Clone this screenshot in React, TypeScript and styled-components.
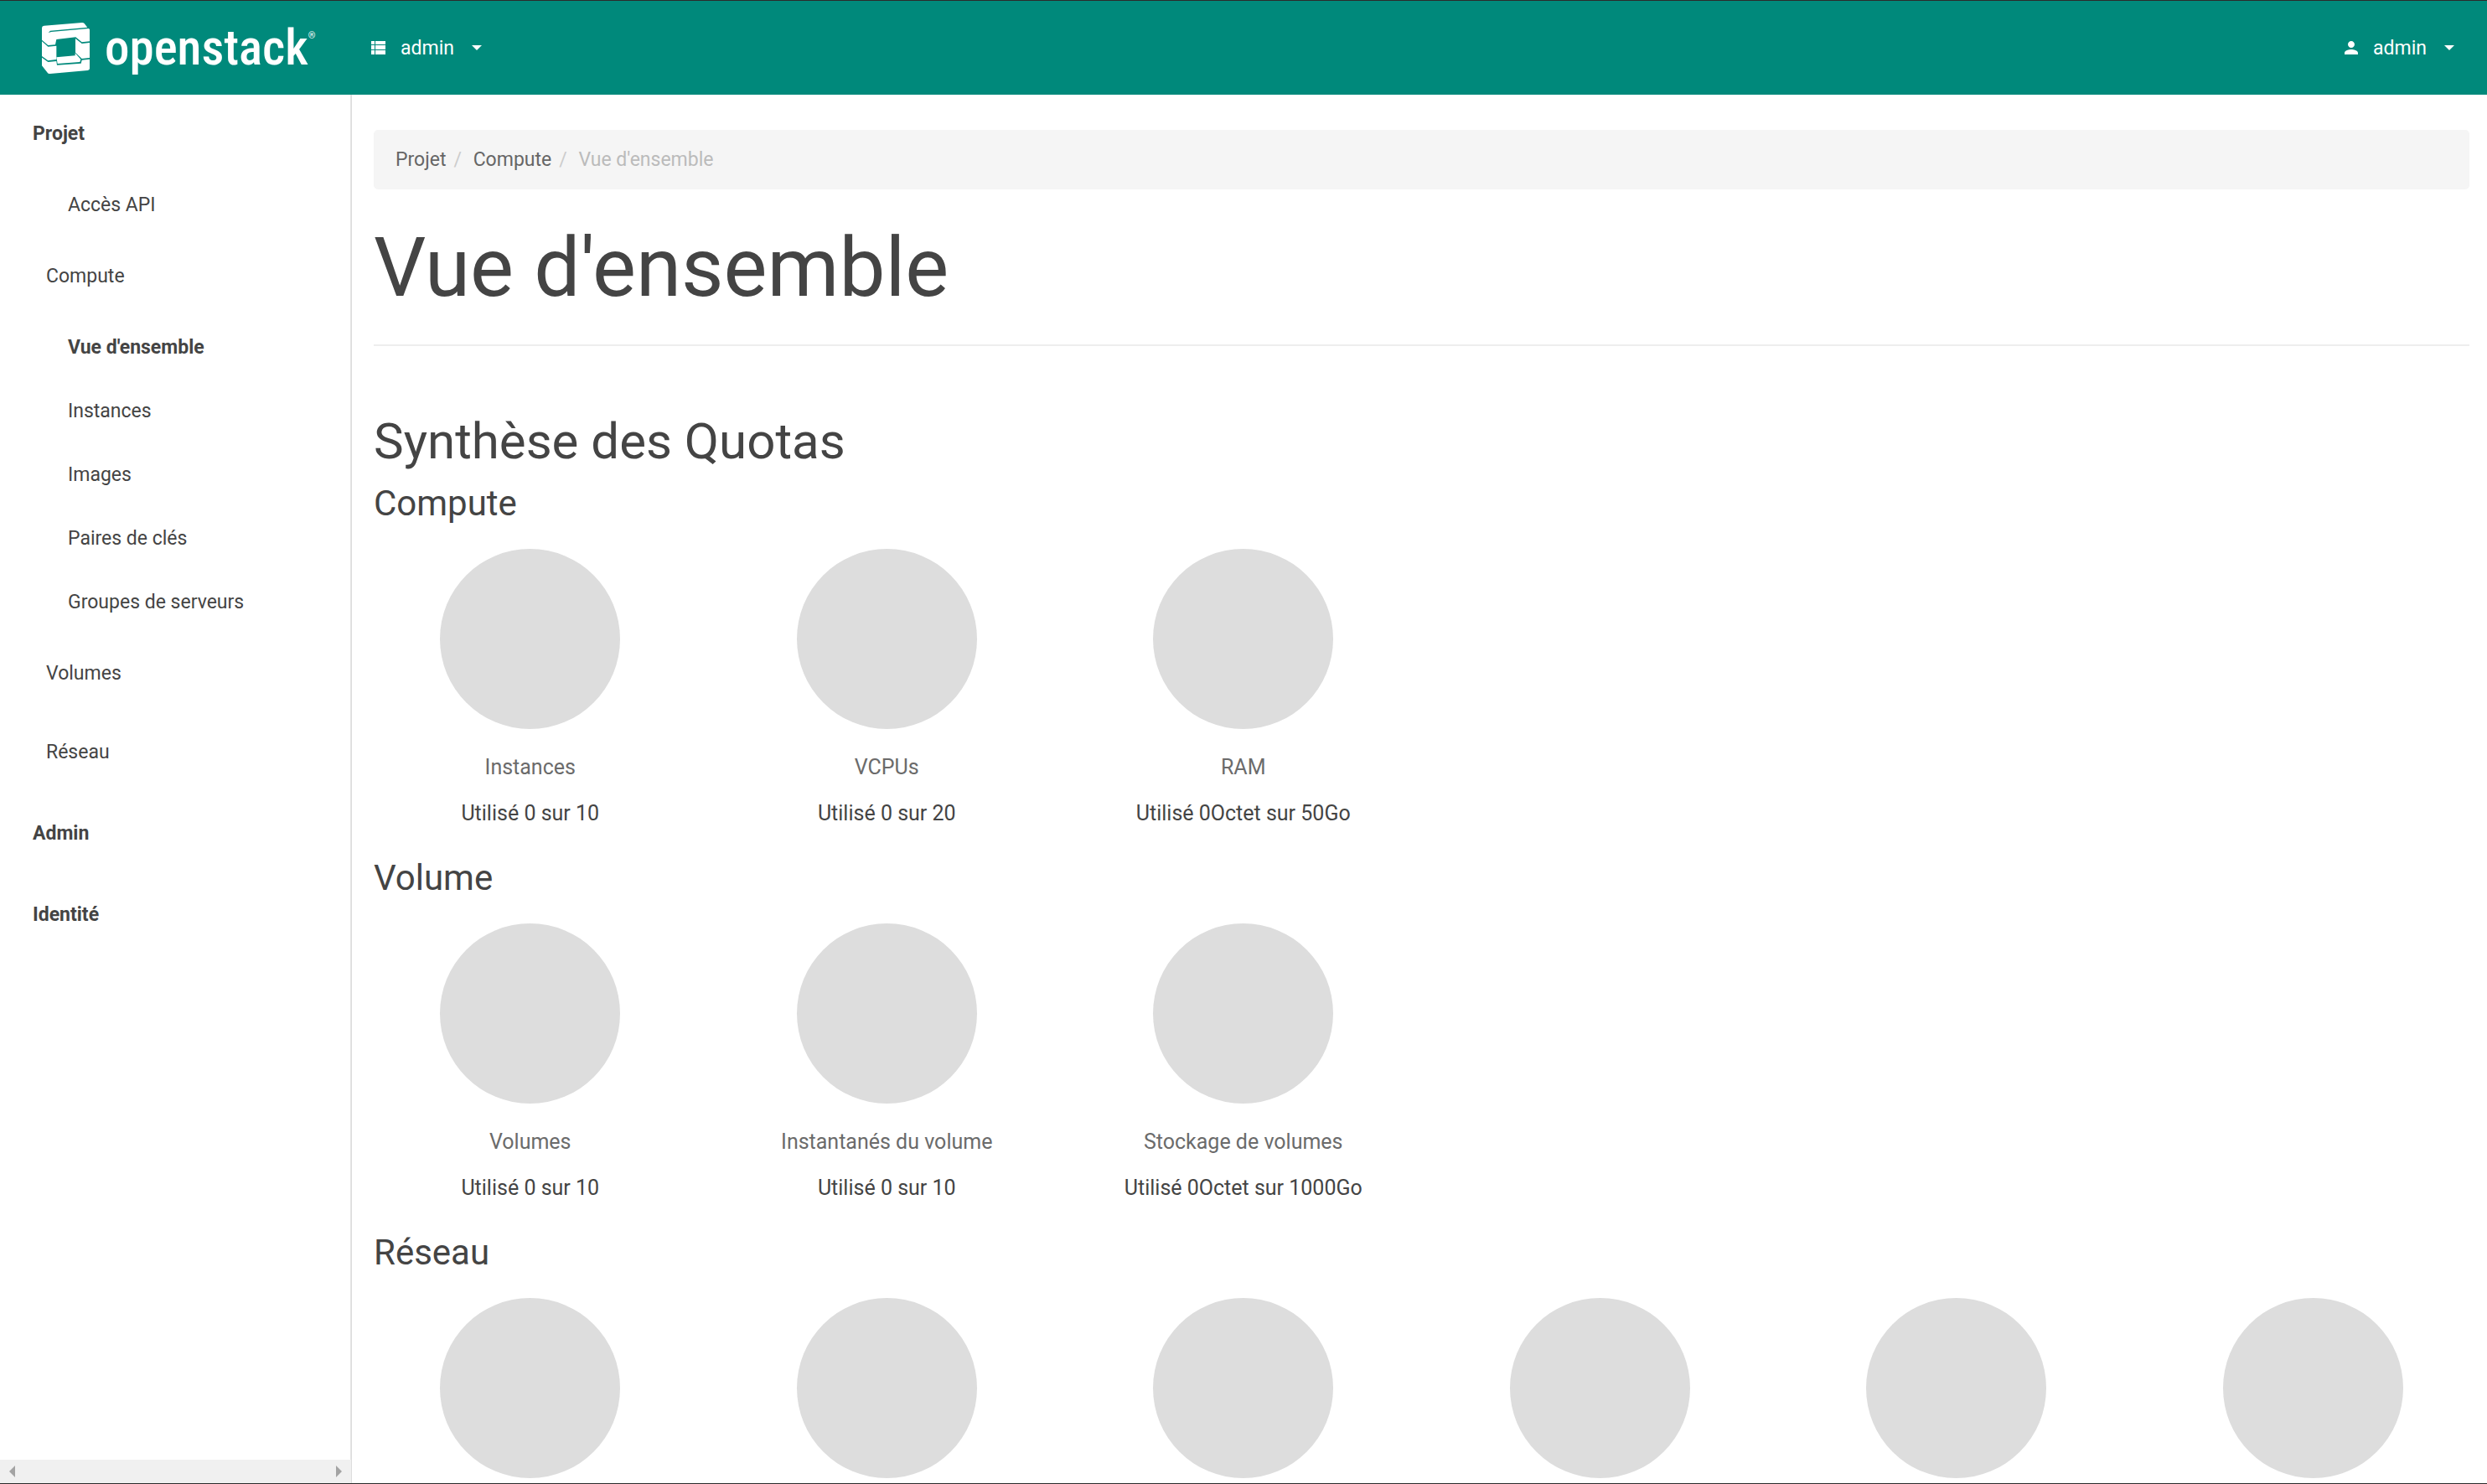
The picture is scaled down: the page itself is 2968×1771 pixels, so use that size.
import React from "react";
import styled, { createGlobalStyle } from "styled-components";

const GlobalStyle = createGlobalStyle`
  * { box-sizing: border-box; }
  body {
    margin: 0;
    background: #fff;
    color: #444;
    font: 23px/34px Roboto, "Liberation Sans", sans-serif;
  }
  h1, h2, h3, p, ul, ol { margin: 0; padding: 0; font-weight: 400; }
  ul, ol { list-style: none; }
  a { color: inherit; text-decoration: none; }
  button { font: inherit; color: inherit; background: none; border: 0; padding: 0; cursor: pointer; }
`;

const Page = styled.div`
  display: flex;
  flex-direction: column;
  height: 100vh;
  border-top: 1px solid #2b2b2b;
  border-bottom: 1px solid #2b2b2b;
  overflow: hidden;
`;

const TopBar = styled.header`
  display: flex;
  align-items: center;
  flex: none;
  height: 112px;
  padding: 0 39px 0 50px;
  background: #00897b;
  color: #fff;
`;

const Brand = styled.a`
  display: flex;
  align-items: center;
  gap: 18px;
  width: 393px;
`;

const Wordmark = styled.span`
  display: flex;
  align-items: flex-start;
  font-family: "Roboto Condensed", "Open Sans Condensed", "Open Sans", sans-serif;
  font-size: 59px;
  font-weight: 500;
  line-height: 62px;
`;

const Registered = styled.small`
  font-family: Roboto, sans-serif;
  font-size: 11px;
  font-weight: 400;
  line-height: 34px;
`;

const MenuButton = styled.button<{ $end?: boolean }>`
  display: flex;
  align-items: center;
  margin-left: ${(p) => (p.$end ? "auto" : "0")};
`;

const MenuLabel = styled.span`
  margin: 0 21px 0 18px;
  padding-top: 1px;
`;

const Caret = styled.span`
  border: 6px solid transparent;
  border-top-color: #fff;
  border-bottom: 0;
`;

const Body = styled.div`
  display: flex;
  flex: 1;
  min-height: 0;
`;

const Sidebar = styled.nav`
  display: flex;
  flex-direction: column;
  flex: none;
  width: 420px;
  border-right: 1px solid #ddd;
`;

const Tree = styled.ul`
  display: flex;
  flex-direction: column;
  flex: 1;
  gap: 12px;
  padding-top: 9px;
  border-right: 1px solid #e4e4e4;
`;

const SubList = styled.ul<{ $spaced?: boolean }>`
  display: flex;
  flex-direction: column;
  gap: ${(p) => (p.$spaced ? "9px" : "0")};
  padding-top: 9px;
`;

const indents = { top: 39, group: 55, leaf: 81 };

const Toggle = styled.button<{ $level: "top" | "group" }>`
  display: block;
  width: 100%;
  height: 76px;
  padding-left: ${(p) => indents[p.$level]}px;
  text-align: left;
  font-weight: ${(p) => (p.$level === "top" ? 700 : 400)};
`;

const Leaf = styled.a<{ $active?: boolean }>`
  display: flex;
  align-items: center;
  height: 76px;
  padding-left: ${indents.leaf}px;
  font-weight: ${(p) => (p.$active ? 700 : 400)};
`;

const ScrollTrack = styled.div`
  display: flex;
  align-items: center;
  justify-content: space-between;
  height: 28px;
  padding: 0 11px;
  background: #f0f0f0;
`;

const ScrollArrow = styled.span<{ $dir: "left" | "right" }>`
  border: 7px solid transparent;
  border-${(p) => (p.$dir === "left" ? "right" : "left")}-color: #a3a3a3;
  border-${(p) => p.$dir}: 0;
`;

const Main = styled.main`
  flex: 1;
  min-width: 0;
  padding: 42px 21px 0 26px;
  overflow: hidden;
`;

const Breadcrumb = styled.ol`
  display: flex;
  align-items: center;
  height: 71px;
  padding: 1px 26px 0;
  border-radius: 5px;
  background: #f5f5f5;
`;

const Crumb = styled.li<{ $active?: boolean }>`
  color: ${(p) => (p.$active ? "#bbb" : "#666")};
  li + &::before {
    content: "/\\00a0";
    padding: 0 8px 0 9px;
    color: #ccc;
  }
`;

const PageTitle = styled.h1`
  margin-top: 40px;
  padding-bottom: 37px;
  border-bottom: 2px solid #eee;
  font-size: 98px;
  line-height: 108px;
`;

const SectionTitle = styled.h2`
  margin-top: 81px;
  margin-bottom: 18px;
  font-size: 60px;
  line-height: 66px;
`;

const QuotaSection = styled.section`
  margin-bottom: 37px;
`;

const QuotaTitle = styled.h3`
  margin-bottom: 31px;
  font-size: 42px;
  line-height: 46px;
`;

const QuotaRow = styled.div`
  display: grid;
  grid-template-columns: repeat(6, 1fr);
  margin: 0 -26px;
`;

const Quota = styled.div`
  display: flex;
  flex-direction: column;
  align-items: center;
  font-size: 25px;
`;

const Pie = styled.div`
  width: 215px;
  height: 215px;
  border-radius: 50%;
  background: #ddd;
`;

const QuotaName = styled.p`
  margin: 29px 0 21px;
  color: #6b6b6b;
`;

const LogoMark = () => (
  <svg width="57" height="61" viewBox="60 51 171 183" fill="#fff" aria-hidden="true">
    <path d="M60 70Q60 63 68 62L204 51Q209 51 212 54L223 68L90 80L83 87L94 84L228 72L231 76V118L203 121L181 103L112 111L108 130L82 132L60 113Z" />
    <path d="M60 118L82 137L112 134V183L82 187L60 171Z" />
    <path d="M180 108L203 126L231 123V177L203 180L180 158Z" />
    <path d="M112 175L179 169V160L199 182L196 192L116 198Z" />
    <path d="M60 176L82 192L112 189L114 203L200 197L203 185L231 182V215Q231 221 224 222L90 234Q84 235 80 230L60 205Z" />
  </svg>
);

const ListIcon = () => (
  <svg width="17" height="16" viewBox="0 0 17 16" fill="#fff" aria-hidden="true">
    <path d="M0 0H4V4H0ZM5 0H17V4H5ZM0 5H4V10H0ZM5 5H17V10H5ZM0 11H4V16H0ZM5 11H17V16H5Z" />
  </svg>
);

const UserIcon = () => (
  <svg width="16" height="16" viewBox="4 4 16 16" fill="#fff" aria-hidden="true">
    <path d="M12 12c2.21 0 4-1.79 4-4s-1.79-4-4-4-4 1.79-4 4 1.79 4 4 4zm0 2c-2.67 0-8 1.34-8 4v2h16v-2c0-2.66-5.33-4-8-4z" />
  </svg>
);

const computeLinks = ["Vue d'ensemble", "Instances", "Images", "Paires de clés", "Groupes de serveurs"];

const quotas: { title: string; items: { name?: string; usage?: string }[] }[] = [
  {
    title: "Compute",
    items: [
      { name: "Instances", usage: "Utilisé 0 sur 10" },
      { name: "VCPUs", usage: "Utilisé 0 sur 20" },
      { name: "RAM", usage: "Utilisé 0Octet sur 50Go" },
    ],
  },
  {
    title: "Volume",
    items: [
      { name: "Volumes", usage: "Utilisé 0 sur 10" },
      { name: "Instantanés du volume", usage: "Utilisé 0 sur 10" },
      { name: "Stockage de volumes", usage: "Utilisé 0Octet sur 1000Go" },
    ],
  },
  { title: "Réseau", items: [{}, {}, {}, {}, {}, {}] },
];

export default function App() {
  return (
    <Page>
      <GlobalStyle />
      <TopBar>
        <Brand href="#">
          <LogoMark />
          <Wordmark>
            openstack<Registered>®</Registered>
          </Wordmark>
        </Brand>
        <MenuButton aria-haspopup="true">
          <ListIcon />
          <MenuLabel>admin</MenuLabel>
          <Caret />
        </MenuButton>
        <MenuButton $end aria-haspopup="true">
          <UserIcon />
          <MenuLabel>admin</MenuLabel>
          <Caret />
        </MenuButton>
      </TopBar>
      <Body>
        <Sidebar>
          <Tree>
            <li>
              <Toggle $level="top" aria-expanded="true">Projet</Toggle>
              <SubList $spaced>
                <li>
                  <Leaf href="#">Accès API</Leaf>
                </li>
                <li>
                  <Toggle $level="group" aria-expanded="true">Compute</Toggle>
                  <SubList>
                    {computeLinks.map((label, i) => (
                      <li key={label}>
                        <Leaf href="#" $active={i === 0}>{label}</Leaf>
                      </li>
                    ))}
                  </SubList>
                </li>
                <li>
                  <Toggle $level="group" aria-expanded="false">Volumes</Toggle>
                  <SubList />
                </li>
                <li>
                  <Toggle $level="group" aria-expanded="false">Réseau</Toggle>
                  <SubList />
                </li>
              </SubList>
            </li>
            <li>
              <Toggle $level="top" aria-expanded="false">Admin</Toggle>
              <SubList />
            </li>
            <li>
              <Toggle $level="top" aria-expanded="false">Identité</Toggle>
              <SubList />
            </li>
          </Tree>
          <ScrollTrack aria-hidden="true">
            <ScrollArrow $dir="left" />
            <ScrollArrow $dir="right" />
          </ScrollTrack>
        </Sidebar>
        <Main>
          <Breadcrumb>
            <Crumb><a href="#">Projet</a></Crumb>
            <Crumb><a href="#">Compute</a></Crumb>
            <Crumb $active>Vue d'ensemble</Crumb>
          </Breadcrumb>
          <PageTitle>Vue d'ensemble</PageTitle>
          <SectionTitle>Synthèse des Quotas</SectionTitle>
          {quotas.map(({ title, items }) => (
            <QuotaSection key={title}>
              <QuotaTitle>{title}</QuotaTitle>
              <QuotaRow>
                {items.map((item, i) => (
                  <Quota key={i}>
                    <Pie />
                    {item.name && <QuotaName>{item.name}</QuotaName>}
                    {item.usage && <p>{item.usage}</p>}
                  </Quota>
                ))}
              </QuotaRow>
            </QuotaSection>
          ))}
        </Main>
      </Body>
    </Page>
  );
}
